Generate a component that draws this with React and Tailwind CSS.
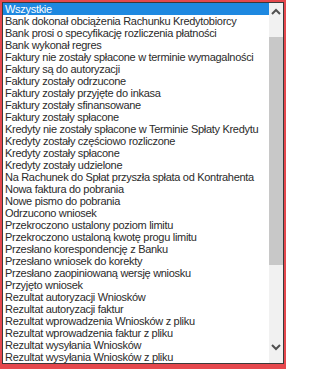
const options = [
  "Wszystkie",
  "Bank dokonał obciążenia Rachunku Kredytobiorcy",
  "Bank prosi o specyfikację rozliczenia płatności",
  "Bank wykonał regres",
  "Faktury nie zostały spłacone w terminie wymagalności",
  "Faktury są do autoryzacji",
  "Faktury zostały odrzucone",
  "Faktury zostały przyjęte do inkasa",
  "Faktury zostały sfinansowane",
  "Faktury zostały spłacone",
  "Kredyty nie zostały spłacone w Terminie Spłaty Kredytu",
  "Kredyty zostały częściowo rozliczone",
  "Kredyty zostały spłacone",
  "Kredyty zostały udzielone",
  "Na Rachunek do Spłat przyszła spłata od Kontrahenta",
  "Nowa faktura do pobrania",
  "Nowe pismo do pobrania",
  "Odrzucono wniosek",
  "Przekroczono ustalony poziom limitu",
  "Przekroczono ustaloną kwotę progu limitu",
  "Przesłano korespondencję z Banku",
  "Przesłano wniosek do korekty",
  "Przesłano zaopiniowaną wersję wniosku",
  "Przyjęto wniosek",
  "Rezultat autoryzacji Wniosków",
  "Rezultat autoryzacji faktur",
  "Rezultat wprowadzenia Wniosków z pliku",
  "Rezultat wprowadzenia faktur z pliku",
  "Rezultat wysyłania Wniosków",
  "Rezultat wysyłania Wniosków z pliku",
]

function Chevron({ up }) {
  return (
    <svg width="10" height="7" viewBox="0 0 10 7" className="text-[#505050]">
      <path
        d={up ? "M1 6 L5 2 L9 6" : "M1 1 L5 5 L9 1"}
        fill="none"
        stroke="currentColor"
        strokeWidth="2"
      />
    </svg>
  )
}

export default function App() {
  return (
    <div className="w-[286px] h-[369px] bg-white border-x-2 border-t-2 border-b-[5px] border-[#e5484d]">
      <div className="flex h-full border border-[#3a3a3a] bg-white">
        {/* LIST */}
        <ul className="flex-1 min-w-0 overflow-hidden font-['Liberation_Sans',Arial,sans-serif] text-[11px] leading-[12px] tracking-[-0.3px] text-[#2b2b2b]">
          {options.map((item, index) => (
            <li
              key={index}
              className={
                index === 0
                  ? "h-[12px] whitespace-nowrap pl-[2px] bg-[#1e88e0] text-white"
                  : "h-[12px] whitespace-nowrap pl-[2px]"
              }
            >
              {item}
            </li>
          ))}
        </ul>

        {/* SCROLLBAR */}
        <div className="flex w-[14px] flex-col bg-[#f1f1f1]">
          <div className="flex h-[16px] items-center justify-center">
            <Chevron up />
          </div>
          <div className="mt-[18px] h-[228px] bg-[#c8c8c8]" />
          <div className="flex-1" />
          <div className="flex h-[24px] items-center justify-center pb-[8px]">
            <Chevron />
          </div>
        </div>
      </div>
    </div>
  )
}
